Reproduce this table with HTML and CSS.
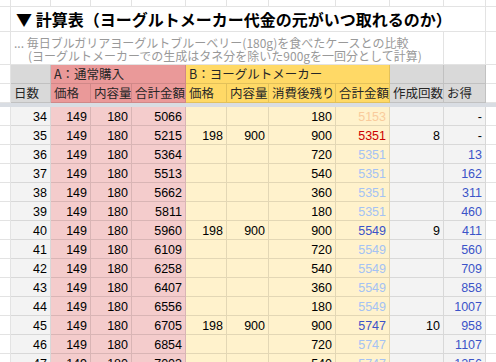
FILE: index.html
```html
<!DOCTYPE html>
<html lang="ja">
<head>
<meta charset="utf-8">
<title>計算表</title>
<link rel="stylesheet" href="styles.css">
</head>
<body>
<div class="sheet">
  <!-- partial row above -->
  <div class="c top"></div><div class="c top"></div><div class="c top"></div><div class="c top"></div><div class="c top"></div><div class="c top"></div><div class="c top"></div><div class="c top"></div><div class="c top"></div><div class="c top"></div><div class="c top"></div><div class="c top end"></div>

  <!-- title row -->
  <div class="c"></div>
  <div class="c title">▼ 計算表（ヨーグルトメーカー代金の元がいつ取れるのか）</div>
  <div class="c end"></div>

  <!-- subtitle row -->
  <div class="c"></div>
  <div class="c sub"><span class="l1">... 毎日ブルガリアヨーグルトブルーベリー(180g)を食べたケースとの比較</span><span class="l2">(ヨーグルトメーカーでの生成はタネ分を除いた900gを一回分として計算)</span></div>
  <div class="c"></div>
  <div class="c end"></div>

  <!-- header row 1 -->
  <div class="c"></div>
  <div class="c h hg"></div>
  <div class="c h hp span3">A：通常購入</div>
  <div class="c h hy span4">B：ヨーグルトメーカー</div>
  <div class="c h hg"></div>
  <div class="c h hg"></div>
  <div class="c end"></div>

  <!-- header row 2 -->
  <div class="c"></div>
  <div class="c h hg">日数</div>
  <div class="c h hp">価格</div>
  <div class="c h hp">内容量</div>
  <div class="c h hp">合計金額</div>
  <div class="c h hy">価格</div>
  <div class="c h hy">内容量</div>
  <div class="c h hy">消費後残り</div>
  <div class="c h hy">合計金額</div>
  <div class="c h hg">作成回数</div>
  <div class="c h hg">お得</div>
  <div class="c end"></div>

  <div class="freeze"></div>

  <!-- data rows -->
  <div class="c"></div><div class="c n g">34</div><div class="c n p">149</div><div class="c n p">180</div><div class="c n p">5066</div><div class="c n y"></div><div class="c n y"></div><div class="c n y">180</div><div class="c n y t-or">5153</div><div class="c n g"></div><div class="c n g">-</div><div class="c end"></div>
  <div class="c"></div><div class="c n g">35</div><div class="c n p">149</div><div class="c n p">180</div><div class="c n p">5215</div><div class="c n y">198</div><div class="c n y">900</div><div class="c n y">900</div><div class="c n y t-red">5351</div><div class="c n g">8</div><div class="c n g">-</div><div class="c end"></div>
  <div class="c"></div><div class="c n g">36</div><div class="c n p">149</div><div class="c n p">180</div><div class="c n p">5364</div><div class="c n y"></div><div class="c n y"></div><div class="c n y">720</div><div class="c n y t-lb">5351</div><div class="c n g"></div><div class="c n g t-bl">13</div><div class="c end"></div>
  <div class="c"></div><div class="c n g">37</div><div class="c n p">149</div><div class="c n p">180</div><div class="c n p">5513</div><div class="c n y"></div><div class="c n y"></div><div class="c n y">540</div><div class="c n y t-lb">5351</div><div class="c n g"></div><div class="c n g t-bl">162</div><div class="c end"></div>
  <div class="c"></div><div class="c n g">38</div><div class="c n p">149</div><div class="c n p">180</div><div class="c n p">5662</div><div class="c n y"></div><div class="c n y"></div><div class="c n y">360</div><div class="c n y t-lb">5351</div><div class="c n g"></div><div class="c n g t-bl">311</div><div class="c end"></div>
  <div class="c"></div><div class="c n g">39</div><div class="c n p">149</div><div class="c n p">180</div><div class="c n p">5811</div><div class="c n y"></div><div class="c n y"></div><div class="c n y">180</div><div class="c n y t-lb">5351</div><div class="c n g"></div><div class="c n g t-bl">460</div><div class="c end"></div>
  <div class="c"></div><div class="c n g">40</div><div class="c n p">149</div><div class="c n p">180</div><div class="c n p">5960</div><div class="c n y">198</div><div class="c n y">900</div><div class="c n y">900</div><div class="c n y t-bl">5549</div><div class="c n g">9</div><div class="c n g t-bl">411</div><div class="c end"></div>
  <div class="c"></div><div class="c n g">41</div><div class="c n p">149</div><div class="c n p">180</div><div class="c n p">6109</div><div class="c n y"></div><div class="c n y"></div><div class="c n y">720</div><div class="c n y t-lb">5549</div><div class="c n g"></div><div class="c n g t-bl">560</div><div class="c end"></div>
  <div class="c"></div><div class="c n g">42</div><div class="c n p">149</div><div class="c n p">180</div><div class="c n p">6258</div><div class="c n y"></div><div class="c n y"></div><div class="c n y">540</div><div class="c n y t-lb">5549</div><div class="c n g"></div><div class="c n g t-bl">709</div><div class="c end"></div>
  <div class="c"></div><div class="c n g">43</div><div class="c n p">149</div><div class="c n p">180</div><div class="c n p">6407</div><div class="c n y"></div><div class="c n y"></div><div class="c n y">360</div><div class="c n y t-lb">5549</div><div class="c n g"></div><div class="c n g t-bl">858</div><div class="c end"></div>
  <div class="c"></div><div class="c n g">44</div><div class="c n p">149</div><div class="c n p">180</div><div class="c n p">6556</div><div class="c n y"></div><div class="c n y"></div><div class="c n y">180</div><div class="c n y t-lb">5549</div><div class="c n g"></div><div class="c n g t-bl">1007</div><div class="c end"></div>
  <div class="c"></div><div class="c n g">45</div><div class="c n p">149</div><div class="c n p">180</div><div class="c n p">6705</div><div class="c n y">198</div><div class="c n y">900</div><div class="c n y">900</div><div class="c n y t-bl">5747</div><div class="c n g">10</div><div class="c n g t-bl">958</div><div class="c end"></div>
  <div class="c"></div><div class="c n g">46</div><div class="c n p">149</div><div class="c n p">180</div><div class="c n p">6854</div><div class="c n y"></div><div class="c n y"></div><div class="c n y">720</div><div class="c n y t-lb">5747</div><div class="c n g"></div><div class="c n g t-bl">1107</div><div class="c end"></div>
  <div class="c"></div><div class="c n g">47</div><div class="c n p">149</div><div class="c n p">180</div><div class="c n p">7003</div><div class="c n y"></div><div class="c n y"></div><div class="c n y">540</div><div class="c n y t-lb">5747</div><div class="c n g"></div><div class="c n g t-bl">1256</div><div class="c end"></div>
</div>
</body>
</html>
```

FILE: styles.css
```css
html, body {
  margin: 0;
  padding: 0;
  background: #ffffff;
  overflow: hidden;
}

body {
  width: 496px;
  height: 362px;
  font-family: "Noto Sans CJK JP", "Noto Sans", sans-serif;
  color: #000;
}

.sheet {
  display: grid;
  grid-template-columns: 11px 40px 40px 41px 54px 41px 42px 67px 54px 54px 42px 10px;
  grid-template-rows: 7px 25px 33px 19px 19px 4px;
  grid-auto-rows: 19px;
  width: 496px;
}

.c {
  box-sizing: border-box;
  border-right: 1px solid rgba(0, 0, 0, 0.11);
  border-bottom: 1px solid rgba(0, 0, 0, 0.11);
  overflow: hidden;
  white-space: nowrap;
  min-width: 0;
}

.c.end {
  border-right: none;
}

.title {
  grid-column: span 10;
  font-weight: 700;
  font-size: 16px;
  line-height: 24px;
  padding-left: 5px;
  color: #000;
}

.sub {
  grid-column: span 9;
  font-size: 12px;
  line-height: 13px;
  color: #999999;
  padding: 4px 0 0 3px;
  display: flex;
  flex-direction: column;
}

.sub .l2 {
  padding-left: 14px;
}

.h {
  font-size: 12.5px;
  line-height: 18px;
  padding-left: 3px;
  color: #262626;
}

.span3 { grid-column: span 3; }
.span4 { grid-column: span 4; }

.hg { background: #d9d9d9; }
.hp { background: #ea9999; }
.hy { background: #ffd966; }

.freeze {
  grid-column: 1 / -1;
  background: #d9dde3;
}

.n {
  font-family: "Liberation Sans", Arial, sans-serif;
  font-size: 12.5px;
  line-height: 18px;
  padding: 1px 3px 0 0;
  text-align: right;
}

.g { background: #f3f3f3; }
.p { background: #f4cccc; }
.y { background: #fff2cc; }

.t-or { color: #f9cb9c; }
.t-red { color: #cc0000; }
.t-lb { color: #a4c2f4; }
.t-bl { color: #3b53c8; }
```
